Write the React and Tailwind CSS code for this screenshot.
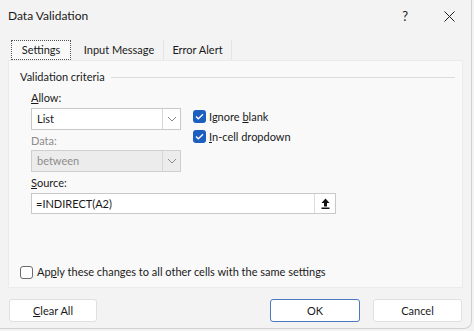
import { useState } from 'react'

const font = { fontFamily: 'Lato, "Noto Sans", sans-serif' }

function Chevron() {
  return (
    <svg width="10" height="6" viewBox="0 0 10 6" fill="none">
      <path d="M1 1l4 4 4-4" stroke="#8a8a8a" strokeWidth="1" />
    </svg>
  )
}

function Check({ checked, onChange }) {
  return (
    <button
      onClick={onChange}
      className={`w-[13px] h-[13px] rounded-[3px] flex items-center justify-center shrink-0 ${checked ? 'bg-[#1d5fbf]' : 'bg-white border border-[#6b6b6b]'}`}
    >
      {checked && (
        <svg width="9" height="7" viewBox="0 0 9 7" fill="none">
          <path d="M1 3.5l2.3 2.3L8 1.2" stroke="white" strokeWidth="1.3" />
        </svg>
      )}
    </button>
  )
}

function Select({ value, disabled }) {
  return (
    <div className={`w-[150px] h-[22px] shrink-0 flex border ${disabled ? 'bg-[#ececec] border-[#cfcfcf] text-[#8c8c8c]' : 'bg-white border-[#c9c9c9] text-[#1a1a1a]'}`}>
      <div className="flex-1 pl-[5px] flex items-center">{value}</div>
      <div className="w-[18px] border-l border-[#d6d6d6] flex items-center justify-center">
        <Chevron />
      </div>
    </div>
  )
}

export default function App() {
  const [ignoreBlank, setIgnoreBlank] = useState(true)
  const [inCell, setInCell] = useState(true)
  const [applyAll, setApplyAll] = useState(false)

  return (
    <div style={font} className="w-[474px] h-[331px] bg-[#f3f3f3] text-[#1a1a1a] text-[11px] leading-[14px] overflow-hidden">
      <div className="w-[472px] h-[329px] border-r border-b border-[#d0d0d0] rounded-br-[8px] flex flex-col">
        {/* title bar */}
        <div className="h-[32px] flex items-center pl-[8px] pr-[16px]">
          <span className="text-[12px] flex-1">Data Validation</span>
          <span className="text-[13px] mr-[36px]">?</span>
          <svg width="11" height="11" viewBox="0 0 11 11">
            <path d="M0.5 0.5l10 10M10.5 0.5l-10 10" stroke="#222" strokeWidth="1" />
          </svg>
        </div>

        {/* tabs */}
        <div className="h-[28px] flex items-end pl-[11px]">
          <div className="h-[20px] w-[60px] border border-dotted border-[#555] bg-[#f9f9f9] flex items-center justify-center">Settings</div>
          <div className="h-[20px] w-[89px] ml-[4px] flex items-center justify-center border-r border-[#e4e4e4]">Input Message</div>
          <div className="h-[20px] w-[68px] flex items-center justify-center border-r border-[#e4e4e4]">Error Alert</div>
        </div>

        {/* panel */}
        <div className="mx-[8px] h-[228px] shrink-0 bg-[#f9f9f9] border border-[#ebebeb] pl-[11px] pr-[7px] pt-[9px]">
          <div className="flex items-center gap-[6px] h-[14px]">
            <span>Validation criteria</span>
            <div className="flex-1 h-px bg-[#dcdcdc]" />
          </div>

          <div className="pl-[11px]">
            <div className="h-[14px] mt-[7px]"><span className="underline">A</span>llow:</div>
            <div className="flex items-start h-[22px] mt-[3px]">
              <Select value="List" />
              <div className="ml-[12px] pt-[2px] flex flex-col gap-[7px]">
                <label className="flex items-center gap-[3px] h-[13px]">
                  <Check checked={ignoreBlank} onChange={() => setIgnoreBlank(!ignoreBlank)} />
                  <span>Ignore <span className="underline">b</span>lank</span>
                </label>
                <label className="flex items-center gap-[3px] h-[13px]">
                  <Check checked={inCell} onChange={() => setInCell(!inCell)} />
                  <span><span className="underline">I</span>n-cell dropdown</span>
                </label>
              </div>
            </div>
            <div className="text-[#8c8c8c] mt-[4px] h-[14px]">Data:</div>
            <div className="mt-[2px]">
              <Select value="between" disabled />
            </div>
            <div className="mt-[4px] h-[14px]"><span className="underline">S</span>ource:</div>
            <div className="mt-[3px] w-[305px] h-[21px] bg-white border border-[#c9c9c9] flex items-center">
              <div className="flex-1 pl-[4px]">=INDIRECT(A2)</div>
              <div className="w-[21px] h-[19px] border-l border-[#dcdcdc] flex items-center justify-center">
                <svg width="9" height="11" viewBox="0 0 9 11">
                  <path d="M4.5 0.5L0.5 5h2.5v3.5h3V5h2.5z" fill="#111" />
                  <rect x="0.5" y="9.5" width="8" height="1.5" fill="#111" />
                </svg>
              </div>
            </div>
          </div>

          <label className="flex items-center gap-[4px] mt-[51px] h-[14px]">
            <button
              onClick={() => setApplyAll(!applyAll)}
              className={`w-[13px] h-[13px] rounded-[3px] border border-[#6b6b6b] shrink-0 ${applyAll ? 'bg-[#1d5fbf]' : 'bg-white'}`}
            />
            <span>Ap<span className="underline">p</span>ly these changes to all other cells with the same settings</span>
          </label>
        </div>

        {/* buttons */}
        <div className="flex px-[9px] mt-[11px]">
          <button className="w-[88px] h-[23px] bg-white border border-[#e0e0e0] rounded-[3px]"><span className="underline">C</span>lear All</button>
          <div className="flex-1" />
          <button className="w-[90px] h-[23px] bg-white border border-[#4a79c0] rounded-[3px]">OK</button>
          <button className="w-[89px] h-[23px] ml-[13px] bg-white border border-[#e0e0e0] rounded-[3px]">Cancel</button>
        </div>
      </div>
    </div>
  )
}
